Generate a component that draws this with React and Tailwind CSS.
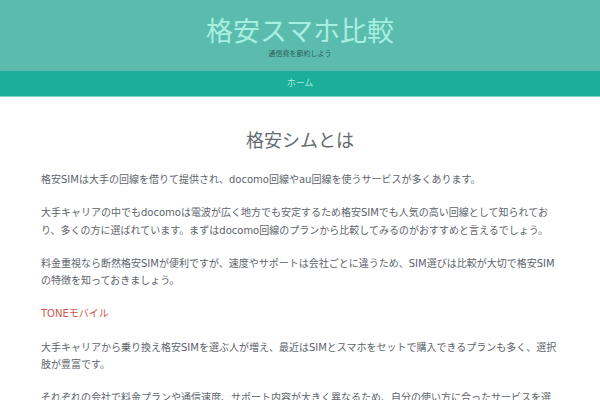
const font = { fontFamily: '"DejaVu Sans", "Noto Sans CJK JP", sans-serif' };

const paragraphs = [
  '格安SIMは大手の回線を借りて提供され、docomo回線やau回線を使うサービスが多くあります。',
  '大手キャリアの中でもdocomoは電波が広く地方でも安定するため格安SIMでも人気の高い回線として知られており、多くの方に選ばれています。まずはdocomo回線のプランから比較してみるのがおすすめと言えるでしょう。',
  '料金重視なら断然格安SIMが便利ですが、速度やサポートは会社ごとに違うため、SIM選びは比較が大切で格安SIMの特徴を知っておきましょう。',
];

const after = [
  '大手キャリアから乗り換え格安SIMを選ぶ人が増え、最近はSIMとスマホをセットで購入できるプランも多く、選択肢が豊富です。',
  'それぞれの会社で料金プランや通信速度、サポート内容が大きく異なるため、自分の使い方に合ったサービスを選ぶことが大切です。',
];

export default function App() {
  return (
    <div className="min-h-[400px] w-[600px] overflow-hidden bg-white" style={font}>
      <header className="flex h-[71px] flex-col items-center bg-[#5bbcad] pt-[18px]">
        <h1 className="text-[27px] font-normal leading-[28px] text-[#a6efe1]">格安スマホ比較</h1>
        <p className="mt-[4px] text-[7px] leading-[8px] text-[#2f5f58]">通信費を節約しよう</p>
      </header>
      <nav className="flex h-[26px] items-center justify-center border-b border-[#86d2c6] bg-[#1cae98]">
        <span className="text-[9px] leading-none text-[#a9e9de]">ホーム</span>
      </nav>
      <main className="px-[41px] pt-[35px]">
        <h2 className="mb-[21px] text-center text-[18px] font-normal leading-[18px] text-[#666b70]">格安シムとは</h2>
        {paragraphs.map((t, i) => (
          <p key={i} className="mb-4 text-[10px] leading-[17.3px] text-[#5d646b]">{t}</p>
        ))}
        <p className="mb-4 text-[10px] leading-[17.3px]">
          <a className="text-[#d0574f]">TONEモバイル</a>
        </p>
        {after.map((t, i) => (
          <p key={i} className="mb-4 text-[10px] leading-[17.3px] text-[#5d646b]">{t}</p>
        ))}
      </main>
    </div>
  );
}
